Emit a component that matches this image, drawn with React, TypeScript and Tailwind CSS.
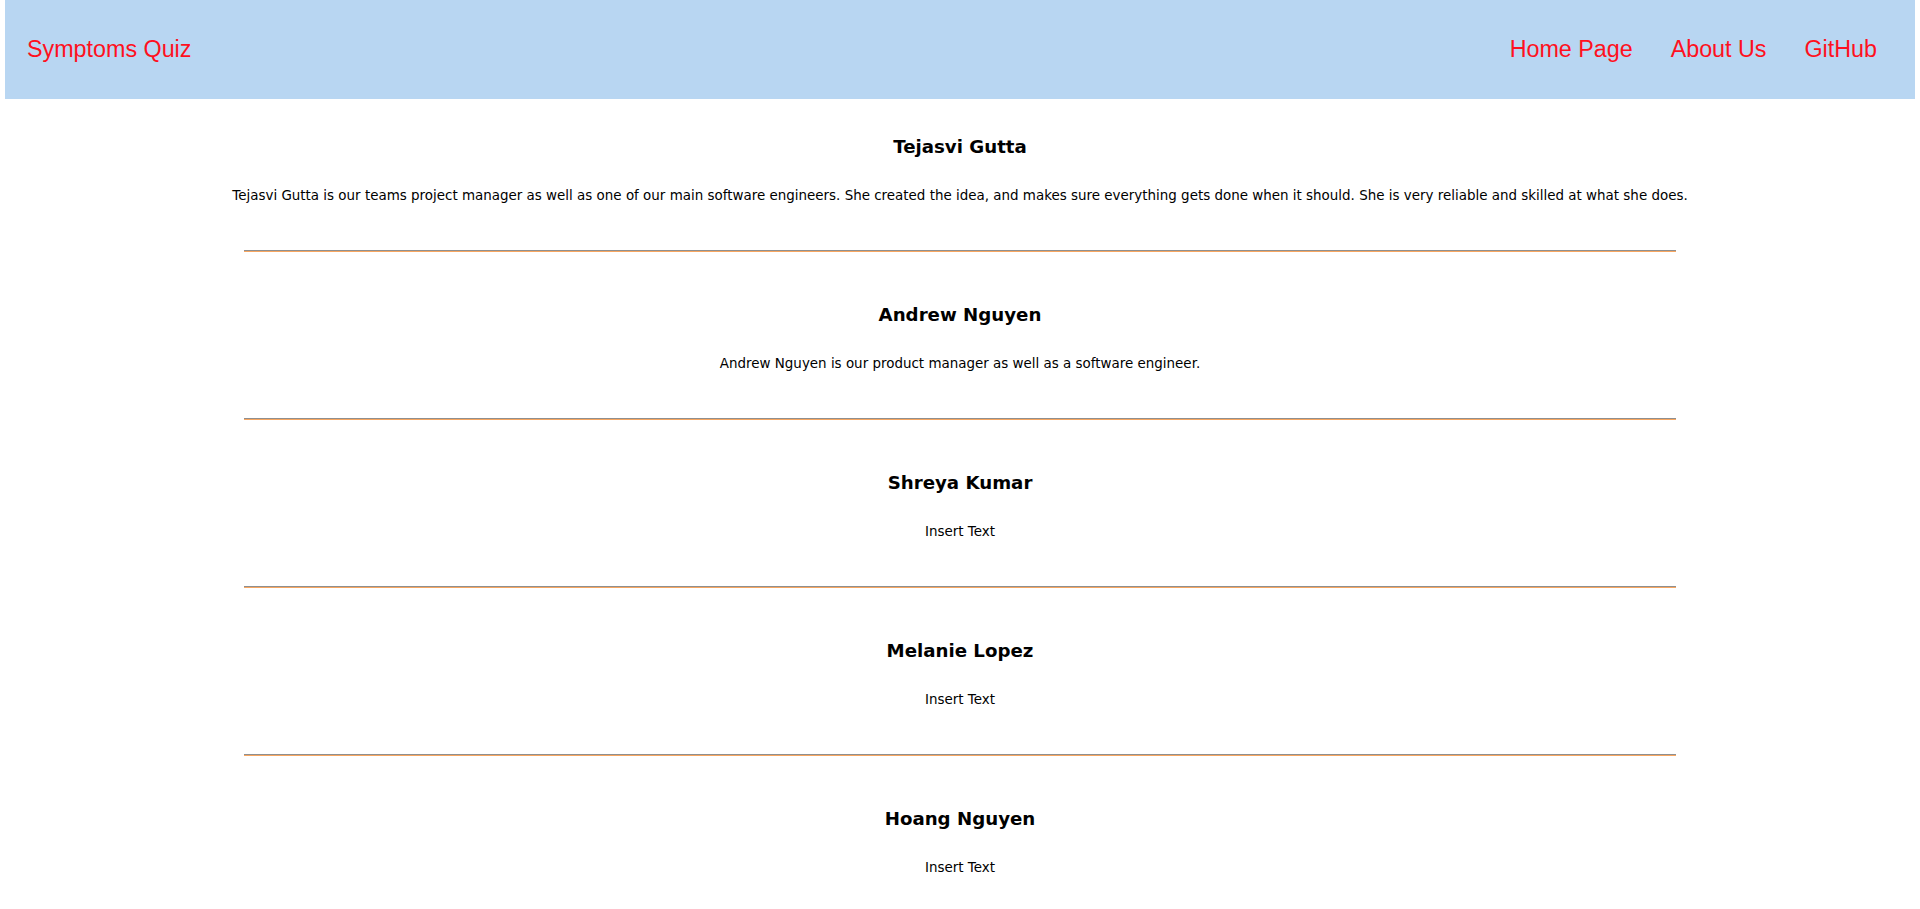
import React from "react";

const members = [
  {
    name: "Tejasvi Gutta",
    text: "Tejasvi Gutta is our teams project manager as well as one of our main software engineers. She created the idea, and makes sure everything gets done when it should. She is very reliable and skilled at what she does.",
  },
  {
    name: "Andrew Nguyen",
    text: "Andrew Nguyen is our product manager as well as a software engineer.",
  },
  { name: "Shreya Kumar", text: "Insert Text" },
  { name: "Melanie Lopez", text: "Insert Text" },
  { name: "Hoang Nguyen", text: "Insert Text" },
];

export default function App() {
  return (
    <div className="min-h-screen bg-white px-[5px]">
      <header
        className="flex h-[99px] items-center justify-between bg-[#b8d6f2] pl-[22px] pr-[38px] text-[23.3px] text-[#ff1020]"
        style={{ fontFamily: '"Liberation Sans", Arial, sans-serif' }}
      >
        <a href="#" className="leading-none">Symptoms Quiz</a>
        <nav className="flex items-center gap-[38px] leading-none">
          <a href="#">Home Page</a>
          <a href="#">About Us</a>
          <a href="#">GitHub</a>
        </nav>
      </header>
      <main
        className="flex flex-col items-center pt-[37px] text-black"
        style={{ fontFamily: '"DejaVu Sans", Verdana, sans-serif' }}
      >
        {members.map((m, i) => (
          <React.Fragment key={m.name}>
            <h3 className="h-[22px] text-center text-[18.2px] font-bold leading-[22px]">
              {m.name}
            </h3>
            <p className="mt-[30px] text-center text-[13.45px] leading-[16px]">{m.text}</p>
            {i < members.length - 1 && (
              <div className="mb-[52px] mt-[46px] h-[2px] w-3/4 border-t border-b border-t-[#8f8f8f] border-b-[#f7a660]" />
            )}
          </React.Fragment>
        ))}
        <div className="h-[40px]" />
      </main>
    </div>
  );
}
